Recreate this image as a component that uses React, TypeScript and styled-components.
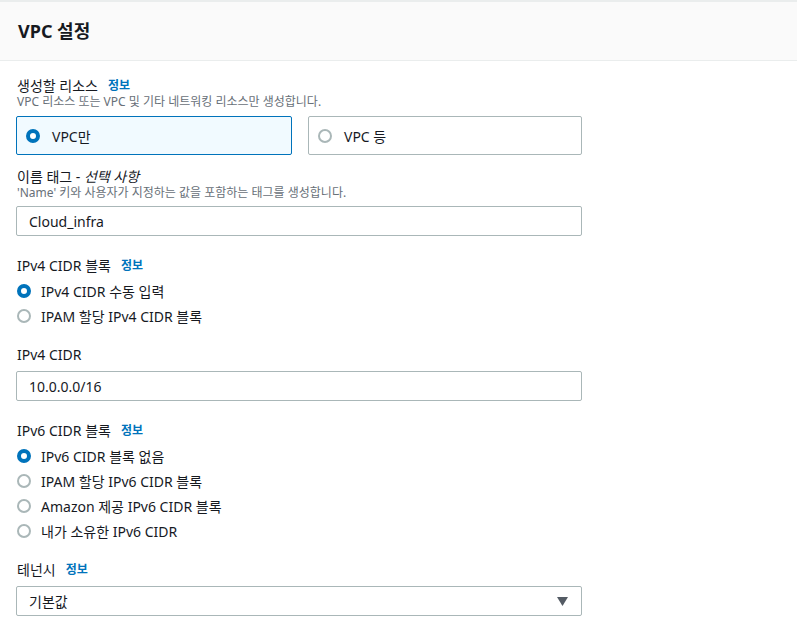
import React from "react";
import styled, { createGlobalStyle } from "styled-components";

const GlobalStyle = createGlobalStyle`
  html, body {
    margin: 0;
    padding: 0;
    background: #ffffff;
  }
  body {
    font-family: "Noto Sans", "Noto Sans CJK KR", sans-serif;
    color: #16191f;
    -webkit-font-smoothing: antialiased;
  }
`;

const Panel = styled.div`
  width: 797px;
  min-height: 634px;
  background: #ffffff;
  border-top: 2px solid #eaeded;
`;

const Header = styled.div`
  height: 58px;
  background: #fafafa;
  border-bottom: 1px solid #eaeded;
  display: flex;
  align-items: center;
  padding-left: 18px;
`;

const Title = styled.h2`
  margin: 0;
  font-size: 18px;
  font-weight: 700;
  line-height: 22px;
  color: #16191f;
`;

const Body = styled.div`
  padding: 16px 0 0 16px;
  width: 566px;
  display: flex;
  flex-direction: column;
`;

// margin above each form field varies with what precedes it
const Field = styled.div<{ $top?: number }>`
  display: flex;
  flex-direction: column;
  margin-top: ${(p) => p.$top ?? 0}px;
`;

const Label = styled.div`
  height: 18px;
  font-size: 14px;
  line-height: 18px;
  padding-left: 1px;
  display: flex;
  align-items: center;
  gap: 10px;
  white-space: nowrap;
`;

const Optional = styled.i`
  font-style: italic;
`;

const InfoLink = styled.a`
  color: #0073bb;
  font-size: 12px;
  font-weight: 700;
  text-decoration: none;
`;

const Description = styled.div`
  height: 14px;
  font-size: 12px;
  line-height: 14px;
  color: #687078;
  padding-left: 1px;
  white-space: nowrap;
`;

const TileRow = styled.div`
  display: grid;
  grid-template-columns: 276px 274px;
  column-gap: 16px;
  margin-top: 7px;
`;

const Tile = styled.div<{ $selected?: boolean }>`
  height: 39px;
  box-sizing: border-box;
  border: 1px solid ${(p) => (p.$selected ? "#0073bb" : "#aab7b8")};
  background: ${(p) => (p.$selected ? "#f1faff" : "#ffffff")};
  border-radius: 2px;
  display: flex;
  align-items: center;
  padding-left: 9px;
  gap: 12px;
  font-size: 14px;
`;

const RadioDot = styled.span<{ $checked?: boolean }>`
  width: 14px;
  height: 14px;
  box-sizing: border-box;
  border-radius: 50%;
  flex: none;
  background: #ffffff;
  border: ${(p) => (p.$checked ? "4px solid #0073bb" : "2px solid #aab7b8")};
`;

const RadioList = styled.div`
  display: flex;
  flex-direction: column;
  margin-top: 3px;
`;

const RadioRow = styled.div`
  height: 25px;
  display: flex;
  align-items: center;
  gap: 10px;
  padding-left: 1px;
  font-size: 14px;
`;

const TextInput = styled.div<{ $top?: number }>`
  height: 30px;
  box-sizing: border-box;
  margin-top: ${(p) => p.$top ?? 7}px;
  border: 1px solid #aab7b8;
  border-radius: 2px;
  display: flex;
  align-items: center;
  padding: 0 12px;
  font-size: 14px;
  color: #16191f;
  justify-content: space-between;
`;

const Caret = styled.svg`
  width: 11px;
  height: 9px;
  margin-right: 1px;
`;

const Info = () => <InfoLink href="#">정보</InfoLink>;

const Radio = ({ checked, children }: { checked?: boolean; children: React.ReactNode }) => (
  <RadioRow>
    <RadioDot $checked={checked} />
    <span>{children}</span>
  </RadioRow>
);

const App = () => (
  <>
    <GlobalStyle />
    <Panel>
      <Header>
        <Title>VPC 설정</Title>
      </Header>
      <Body>
        <Field>
          <Label>
            생성할 리소스 <Info />
          </Label>
          <Description>VPC 리소스 또는 VPC 및 기타 네트워킹 리소스만 생성합니다.</Description>
          <TileRow>
            <Tile $selected>
              <RadioDot $checked />
              <span>VPC만</span>
            </Tile>
            <Tile>
              <RadioDot />
              <span>VPC 등</span>
            </Tile>
          </TileRow>
        </Field>

        <Field $top={13}>
          <Label>
            <span>
              이름 태그 - <Optional>선택 사항</Optional>
            </span>
          </Label>
          <Description>'Name' 키와 사용자가 지정하는 값을 포함하는 태그를 생성합니다.</Description>
          <TextInput $top={6}>Cloud_infra</TextInput>
        </Field>

        <Field $top={21}>
          <Label>
            IPv4 CIDR 블록 <Info />
          </Label>
          <RadioList>
            <Radio checked>IPv4 CIDR 수동 입력</Radio>
            <Radio>IPAM 할당 IPv4 CIDR 블록</Radio>
          </RadioList>
        </Field>

        <Field $top={18}>
          <Label>IPv4 CIDR</Label>
          <TextInput>10.0.0.0/16</TextInput>
        </Field>

        <Field $top={21}>
          <Label>
            IPv6 CIDR 블록 <Info />
          </Label>
          <RadioList>
            <Radio checked>IPv6 CIDR 블록 없음</Radio>
            <Radio>IPAM 할당 IPv6 CIDR 블록</Radio>
            <Radio>Amazon 제공 IPv6 CIDR 블록</Radio>
            <Radio>내가 소유한 IPv6 CIDR</Radio>
          </RadioList>
        </Field>

        <Field $top={18}>
          <Label>
            테넌시 <Info />
          </Label>
          <TextInput>
            <span>기본값</span>
            <Caret viewBox="0 0 11 9">
              <path d="M0 0 H11 L5.5 9 Z" fill="#545b64" />
            </Caret>
          </TextInput>
        </Field>
      </Body>
    </Panel>
  </>
);

export default App;
